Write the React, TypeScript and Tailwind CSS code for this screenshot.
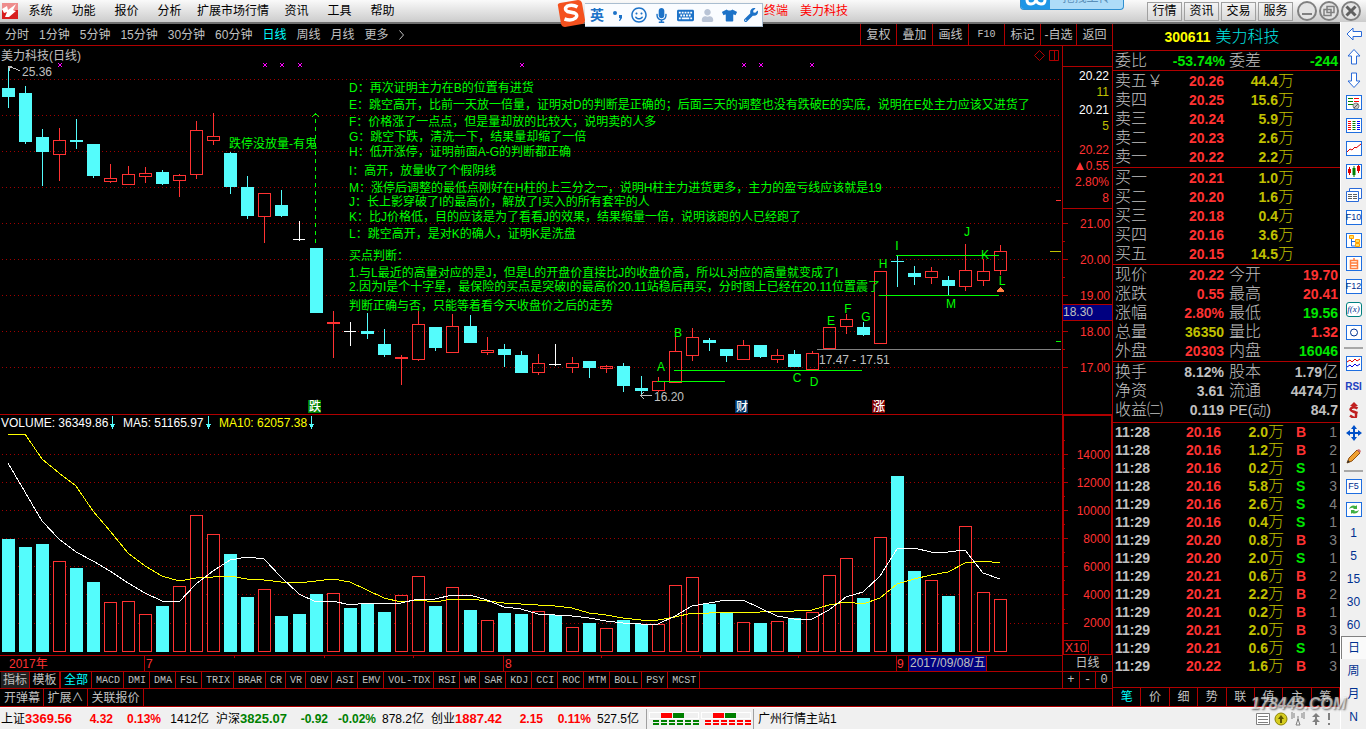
import React from 'react';
import { clsx } from 'clsx';
import {
  FaKeyboard,
  FaMicrophone,
  FaRegSmile,
  FaTshirt,
  FaUser,
  FaWrench,
} from 'react-icons/fa';

const RED = '#ff3232';
const LINE = '#b00000';
const CYAN = '#54fcfc';
const GREEN = '#00ff00';

const menus = ['系统', '功能', '报价', '分析', '扩展市场行情', '资讯', '工具', '帮助'];
const headerButtons = ['行情', '资讯', '交易', '服务'];
const periods = ['分时', '1分钟', '5分钟', '15分钟', '30分钟', '60分钟', '日线', '周线', '月线', '更多'];
const chartTools = ['复权', '叠加', '画线', 'F10', '标记', '-自选', '返回'];

const indicators = [
  'MACD', 'DMI', 'DMA', 'FSL', 'TRIX', 'BRAR', 'CR', 'VR', 'OBV', 'ASI', 'EMV',
  'VOL-TDX', 'RSI', 'WR', 'SAR', 'KDJ', 'CCI', 'ROC', 'MTM', 'BOLL', 'PSY', 'MCST',
];

type Kind = 'down' | 'up' | 'flat' | 'cross';

// kind, high, body top, body bottom, low
const candles: [Kind, number, number, number, number][] = [
  ['down', 66, 88, 97, 108],
  ['down', 86, 93, 142, 144],
  ['down', 129, 137, 152, 186],
  ['up', 128, 140, 155, 181],
  ['down', 119, 140, 142, 149],
  ['down', 144, 144, 176, 178],
  ['up', 164, 178, 182, 183],
  ['up', 166, 174, 185, 185],
  ['up', 167, 173, 177, 183],
  ['down', 170, 172, 184, 185],
  ['up', 174, 175, 181, 197],
  ['up', 121, 130, 175, 179],
  ['up', 113, 136, 141, 145],
  ['down', 152, 153, 187, 194],
  ['down', 176, 187, 216, 219],
  ['up', 193, 193, 217, 243],
  ['down', 190, 205, 216, 217],
  ['flat', 221, 239, 240, 241],
  ['down', 248, 248, 313, 313],
  ['up', 311, 322, 324, 358],
  ['flat', 322, 331, 332, 346],
  ['down', 313, 331, 334, 339],
  ['down', 329, 344, 355, 357],
  ['up', 355, 357, 359, 385],
  ['up', 311, 324, 360, 361],
  ['down', 327, 327, 348, 351],
  ['up', 314, 326, 353, 353],
  ['down', 315, 326, 343, 343],
  ['up', 337, 350, 353, 355],
  ['down', 344, 349, 355, 367],
  ['down', 351, 355, 373, 373],
  ['up', 354, 363, 373, 375],
  ['flat', 344, 364, 365, 366],
  ['up', 357, 363, 368, 373],
  ['down', 361, 361, 368, 378],
  ['up', 365, 366, 369, 373],
  ['down', 363, 366, 386, 392],
  ['down', 376, 388, 391, 396],
  ['up', 377, 381, 391, 392],
  ['up', 337, 351, 383, 383],
  ['up', 328, 337, 356, 361],
  ['down', 338, 340, 343, 351],
  ['down', 349, 349, 356, 362],
  ['up', 340, 345, 360, 360],
  ['down', 345, 345, 357, 358],
  ['up', 349, 355, 360, 363],
  ['down', 350, 354, 367, 367],
  ['up', 351, 353, 370, 370],
  ['up', 327, 327, 349, 349],
  ['up', 314, 319, 327, 334],
  ['down', 322, 327, 335, 336],
  ['up', 271, 271, 344, 344],
  ['cross', 256, 261, 262, 287],
  ['down', 266, 273, 277, 285],
  ['up', 267, 271, 278, 284],
  ['down', 276, 280, 286, 295],
  ['up', 244, 270, 287, 291],
  ['up', 259, 271, 281, 286],
  ['up', 245, 251, 271, 275],
];

const volumeTops = [
  539, 547, 544, 561, 568, 582, 602, 601, 614, 606, 586, 515, 534, 554, 597,
  589, 616, 614, 594, 593, 608, 604, 612, 595, 576, 606, 587, 610, 620, 613,
  614, 611, 615, 627, 623, 628, 620, 624, 624, 585, 577, 604, 613, 622, 623,
  621, 618, 612, 575, 558, 598, 537, 476, 571, 580, 596, 526, 592, 599,
];
const hollowVolumes = [
  3, 6, 7, 8, 10, 11, 12, 15, 19, 23, 24, 26, 28, 31, 33, 35, 38, 39, 40, 43,
  45, 47, 48, 49, 51, 54, 56, 57, 58,
];

const ma5 = [
  463, 492, 521, 539, 552, 561, 571, 583, 593, 601, 602, 584, 571, 560, 557,
  559, 577, 594, 602, 601, 605, 603, 603, 603, 599, 599, 595, 595, 600, 607,
  609, 614, 615, 616, 618, 621, 623, 624, 624, 616, 606, 603, 600, 600, 608,
  616, 619, 619, 610, 597, 592, 576, 549, 548, 552, 552, 550, 573, 579,
];
const ma10 = [
  434, 434, 459, 473, 486, 511, 531, 553, 566, 576, 581, 578, 577, 576, 579,
  580, 582, 583, 581, 579, 582, 590, 598, 602, 600, 602, 599, 599, 601, 603,
  604, 605, 606, 608, 613, 615, 618, 620, 620, 617, 613, 613, 612, 612, 612,
  611, 611, 610, 605, 602, 604, 598, 584, 579, 575, 572, 563, 561, 563,
];

const notes: [number, string][] = [
  [87, 'D：再次证明主力在B的位置有进货'],
  [104, 'E：跳空高开，比前一天放一倍量，证明对D的判断是正确的；后面三天的调整也没有跌破E的实底，说明在E处主力应该又进货了'],
  [121, 'F：价格涨了一点点，但是量却放的比较大，说明卖的人多'],
  [136, 'G：跳空下跌，清洗一下，结果量却缩了一倍'],
  [151, 'H：低开涨停，证明前面A-G的判断都正确'],
  [170, 'I：高开，放量收了个假阴线'],
  [187, 'M：涨停后调整的最低点刚好在H柱的上三分之一，说明H柱主力进货更多，主力的盈亏线应该就是19'],
  [201, 'J：长上影穿破了I的最高价，解放了I买入的所有套牢的人'],
  [216, 'K：比J价格低，目的应该是为了看看J的效果，结果缩量一倍，说明该跑的人已经跑了'],
  [233, 'L：跳空高开，是对K的确人，证明K是洗盘'],
  [255, '买点判断：'],
  [272, '1.与L最近的高量对应的是J，但是L的开盘价直接比J的收盘价高，所以L对应的高量就变成了I'],
  [286, '2.因为I是个十字星，最保险的买点是突破I的最高价20.11站稳后再买，分时图上已经在20.11位置震了'],
  [305, '判断正确与否，只能等着看今天收盘价之后的走势'],
];

const letters: [string, number, number][] = [
  ['A', 661, 367], ['B', 678, 333], ['C', 797, 378], ['D', 814, 382],
  ['E', 831, 321], ['F', 848, 309], ['G', 866, 317], ['H', 883, 264],
  ['I', 897, 246], ['J', 967, 232], ['K', 985, 255], ['L', 1002, 281],
  ['M', 951, 304],
];

const badges: [string, number, string][] = [
  ['跌', 308, '#008000'],
  ['财', 735, '#003366'],
  ['涨', 872, '#800000'],
];

const asks = [
  ['卖五', '20.26', '44.4'],
  ['卖四', '20.25', '15.6'],
  ['卖三', '20.24', '5.9'],
  ['卖二', '20.23', '2.6'],
  ['卖一', '20.22', '2.2'],
];
const bids = [
  ['买一', '20.21', '1.0'],
  ['买二', '20.20', '1.6'],
  ['买三', '20.18', '0.4'],
  ['买四', '20.16', '3.6'],
  ['买五', '20.15', '14.5'],
];

type Detail = [string, string, string, string, string, string];
const R = 'text-[#ff3232]';
const G = 'text-[#00e600]';
const Y = 'text-[#c0c000]';
const W = 'text-[#c0c0c0]';
const priceDetails: Detail[] = [
  ['现价', '20.22', R, '今开', '19.70', R],
  ['涨跌', '0.55', R, '最高', '20.41', R],
  ['涨幅', '2.80%', R, '最低', '19.56', G],
  ['总量', '36350', Y, '量比', '1.32', R],
  ['外盘', '20303', R, '内盘', '16046', G],
];
const shareDetails: Detail[] = [
  ['换手', '8.12%', W, '股本', '1.79亿', W],
  ['净资', '3.61', W, '流通', '4474万', W],
  ['收益㈡', '0.119', W, 'PE(动)', '84.7', W],
];

const ticks: [string, string, string, 'B' | 'S', number][] = [
  ['11:28', '20.16', '2.0', 'B', 1],
  ['11:28', '20.16', '1.2', 'B', 2],
  ['11:28', '20.16', '0.2', 'S', 1],
  ['11:28', '20.16', '5.8', 'S', 3],
  ['11:29', '20.16', '2.6', 'S', 4],
  ['11:29', '20.16', '0.4', 'S', 1],
  ['11:29', '20.20', '0.8', 'B', 3],
  ['11:29', '20.20', '2.0', 'S', 1],
  ['11:29', '20.21', '0.6', 'B', 2],
  ['11:29', '20.21', '2.2', 'B', 2],
  ['11:29', '20.21', '0.2', 'B', 1],
  ['11:29', '20.21', '2.0', 'B', 3],
  ['11:29', '20.21', '0.6', 'S', 1],
  ['11:29', '20.22', '1.6', 'B', 3],
];

const quoteTabs = ['笔', '价', '细', '势', '联', '值', '主', '筹'];

const indexes = [
  { name: '上证', value: '3369.56', change: '4.32', percent: '0.13%', amount: '1412亿', up: true },
  { name: '沪深', value: '3825.07', change: '-0.92', percent: '-0.02%', amount: '878.2亿', up: false },
  { name: '创业', value: '1887.42', change: '2.15', percent: '0.11%', amount: '527.5亿', up: true },
];

const barX = (index: number) => Math.floor(2.35 + index * 17.1);
const toPoints = (values: number[]) =>
  values.map((y, i) => `${barX(i) + 6},${y}`).join(' ');

const Candle: React.FC<{ index: number }> = ({ index }) => {
  const [kind, high, top, bottom, low] = candles[index];
  const x = barX(index);
  const height = Math.max(bottom - top, 1);

  if (kind === 'up') {
    return (
      <g fill={RED}>
        <rect x={x + 6} y={high} width={1} height={top - high} />
        <rect x={x + 6} y={bottom} width={1} height={low - bottom} />
        {height <= 2 ? (
          <rect x={x} y={top} width={13} height={height} />
        ) : (
          <rect
            x={x + 0.5}
            y={top + 0.5}
            width={12}
            height={height - 1}
            fill="none"
            stroke={RED}
          />
        )}
      </g>
    );
  }
  return (
    <g fill={kind === 'flat' ? '#ffffff' : CYAN}>
      <rect x={x + 6} y={high} width={1} height={low - high} />
      <rect x={x} y={top} width={kind === 'flat' ? 12 : 13} height={height} />
    </g>
  );
};

const GridLines: React.FC<{ rows: number[] }> = ({ rows }) => (
  <g stroke="#a00000" strokeDasharray="1 3">
    {rows.map((y) => (
      <line key={y} x1={2} x2={1060} y1={y + 0.5} y2={y + 0.5} />
    ))}
  </g>
);

const PriceChart = () => (
  <svg
    className="block h-[368px] w-full"
    viewBox="0 46 1061 368"
    preserveAspectRatio="xMinYMin meet"
    fontSize={12}
  >
    <g shapeRendering="crispEdges">
      <GridLines rows={[79, 115, 151, 187, 223, 259, 295, 331, 367]} />
      {candles.map((_, i) => (
        <Candle key={i} index={i} />
      ))}
      <g fill={GREEN}>
        <rect x={896} y={255} width={103} height={1} />
        <rect x={879} y={295} width={120} height={1} />
        <rect x={674} y={370} width={188} height={1} />
        <rect x={657} y={381} width={68} height={1} />
        <rect x={1056} y={341} width={5} height={1} />
        <path d="M315 113h1v1h1v1h-3v-1h1zM312 116h2v-1h-1v2h-1zM317 115h1v1h1v1h-1z" />
      </g>
      <line x1={315.5} x2={315.5} y1={119} y2={243} stroke={GREEN} strokeDasharray="4 4" />
      <rect x={817} y={349} width={244} height={1} fill="#808080" />
      <rect x={1050} y={251} width={11} height={1} fill="#c0c000" />
      <rect x={1056} y={200} width={5} height={1} fill={RED} />
      <path d="M997 291l3-4h1l3 4v1h-7z" fill="#ff7f40" />
      {[60, 265, 282, 300, 522, 744, 761, 812].map((x) => (
        <path
          key={x}
          d={`M${x - 2} 63h1v1h2v-1h1v1h-1v2h1v1h-1v-1h-2v1h-1v-1h1v-2h-1z`}
          fill="#ff00ff"
        />
      ))}
    </g>
    <g fill="none" stroke="#b00000">
      <path d="M1039.5 50.5l5 5-5 5-5-5z" />
      <path d="M1049.5 50.5h9v10h-9zM1054.5 50.5v10" />
    </g>
    <g fill="none" stroke="#c0c0c0" shapeRendering="crispEdges">
      <path d="M8 67l5 1 3 1 4 2M8 67l4-1M9 67l1 4" />
      <path d="M640 395.5h12M641 395l3-3M641 396l3 3" />
    </g>
    <g fill="#c0c0c0">
      <text x={1} y={60} fontSize={12}>美力科技(日线)</text>
      <text x={22} y={76}>25.36</text>
      <text x={654} y={401}>16.20</text>
      <text x={819} y={364}>17.47 - 17.51</text>
    </g>
    <g fill={GREEN}>
      <text x={229} y={148}>跌停没放量-有鬼</text>
      {notes.map(([y, text]) => (
        <text key={y} x={349} y={y + 5}>{text}</text>
      ))}
      {letters.map(([letter, x, y]) => (
        <text key={letter} x={x} y={y + 4} textAnchor="middle">{letter}</text>
      ))}
    </g>
    {badges.map(([label, x, color]) => (
      <g key={label}>
        <rect x={x} y={400} width={13} height={13} fill={color} />
        <text x={x + 1} y={411} fill="#ffffff" fontWeight={500}>{label}</text>
      </g>
    ))}
  </svg>
);

const VolumeChart = () => (
  <svg
    className="block h-[241px] w-full border-t border-[#b00000]"
    viewBox="0 415 1061 240"
    preserveAspectRatio="xMinYMin meet"
    fontSize={12}
  >
    <g shapeRendering="crispEdges">
      <GridLines rows={[454, 482, 510, 538, 566, 594, 623]} />
      {volumeTops.map((top, i) =>
        hollowVolumes.includes(i) ? (
          <rect
            key={i}
            x={barX(i) + 0.5}
            y={top + 0.5}
            width={12}
            height={651 - top}
            fill="#000000"
            stroke={RED}
          />
        ) : (
          <rect key={i} x={barX(i)} y={top} width={13} height={652 - top} fill={CYAN} />
        )
      )}
      <polyline points={toPoints(ma10)} fill="none" stroke="#ffff00" />
      <polyline points={toPoints(ma5)} fill="none" stroke="#ffffff" />
      {[112, 208, 311].map((x) => (
        <path key={x} d={`M${x} 416h1v8h2v1h-1v2h-1v2h-1v-2h-1v-2h-1v-1h2z`} fill={CYAN} />
      ))}
    </g>
    <text x={1} y={427} fill="#ffffff">VOLUME: 36349.86</text>
    <text x={123} y={427} fill="#ffffff">MA5: 51165.97</text>
    <text x={219} y={427} fill="#ffff00">MA10: 62057.38</text>
  </svg>
);

const TimeAxis = () => (
  <svg
    className="block h-[16px] w-full border-t border-[#b00000]"
    viewBox="0 656 1061 15"
    preserveAspectRatio="xMinYMin meet"
    fontSize={12}
  >
    <g fill={LINE} shapeRendering="crispEdges">
      {[144, 503, 896].map((x) => (
        <rect key={x} x={x} y={656} width={1} height={15} />
      ))}
      {[234, 324, 413, 601, 700, 798].map((x) => (
        <rect key={x} x={x} y={656} width={1} height={2} />
      ))}
      <rect x={908} y={656} width={79} height={15} />
      <rect x={909} y={656} width={77} height={15} fill="#000080" />
    </g>
    <g fill={RED}>
      <text x={9} y={668}>2017年</text>
      <text x={146} y={668}>7</text>
      <text x={505} y={668}>8</text>
      <text x={897} y={668}>9</text>
    </g>
    <text x={910} y={667} fill="#c0c0c0">2017/09/08/五</text>
  </svg>
);

const AxisColumn = () => (
  <div className="flex w-[50px] shrink-0 flex-col border-l border-[#b00000]">
    <div className="h-[20px]" />
    <div className="flex h-[143px] flex-col border-y border-[#b00000] pr-[3px] text-right leading-[16px]">
      <span className="pt-px text-white">20.22</span>
      <span className="text-[#c0c000]">11</span>
      <span className="pt-[2px] text-white">20.21</span>
      <span className="text-[#c0c000]">5</span>
      <div className="flex flex-col pt-[8px] text-[#ff3232]">
        <span>20.22</span>
        <span className="flex items-center justify-end gap-[2px]">
          <svg className="h-[8px] w-[8px]" viewBox="0 0 8 8">
            <path d="M4 0l4 8H0z" fill={RED} />
          </svg>
          0.55
        </span>
        <span>2.80%</span>
        <span>8</span>
      </div>
    </div>
    <svg className="block h-[205px] w-full" viewBox="0 209 49 205" fontSize={12}>
      <g fill={LINE} shapeRendering="crispEdges">
        {[223, 259, 295, 331, 367].map((y) => (
          <rect key={y} x={0} y={y} width={5} height={1} />
        ))}
        {[241, 277, 313, 349].map((y) => (
          <rect key={y} x={0} y={y} width={2} height={1} />
        ))}
        <rect x={0} y={304} width={49} height={17} />
        <rect x={0} y={305} width={49} height={15} fill="#000080" />
      </g>
      <text x={0} y={316} fill="#c0c0c0">18.30</text>
      <g fill={RED} textAnchor="end">
        {['21.00', '20.00', '19.00', '18.00', '17.00'].map((label, i) => (
          <text key={label} x={47} y={228 + i * 36}>{label}</text>
        ))}
      </g>
    </svg>
    <svg
      className="block h-[241px] w-full border border-t-2 border-[#b00000]"
      viewBox="0 416 47 238"
      fontSize={12}
    >
      <g fill={LINE} shapeRendering="crispEdges">
        {[454, 482, 510, 538, 566, 594, 623].map((y) => (
          <React.Fragment key={y}>
            <rect x={0} y={y} width={4} height={1} />
            <rect x={0} y={y - 14} width={1} height={1} />
          </React.Fragment>
        ))}
        <path d="M0 640h25v14h-1v-13H0z" />
      </g>
      <g fill={RED}>
        <text x={1} y={652}>X10</text>
        <g textAnchor="end">
          {[14000, 12000, 10000, 8000, 6000, 4000, 2000].map((value, i) => (
            <text key={value} x={46} y={459 + i * 28}>{value}</text>
          ))}
        </g>
      </g>
    </svg>
    <div className="h-[16px] text-center leading-[16px] text-[#c0c0c0]">日线</div>
    <div className="flex h-[17px] divide-x divide-[#b00000] border-t border-[#b00000] font-['Liberation_Mono',monospace] leading-[16px] text-[#c0c0c0]">
      {['+', '-', '0'].map((label) => (
        <button key={label} type="button" className="flex-1">
          {label}
        </button>
      ))}
    </div>
  </div>
);

const ImeBar = () => (
  <div className="absolute left-[557px] top-0 z-10 flex h-[27px] w-[206px] items-center">
    <svg className="h-[27px] w-[28px] shrink-0" viewBox="0 0 28 27">
      <path d="M1 6Q0 4 3 3L21 0q3 0 4 3l3 17q0 3-3 4L8 27q-3 0-4-3z" fill="#f4511e" />
      <path
        d="M20.500 7q-5-3-10-1-4 3 0 5.500l7 1.500q4 2 1 5-4 3.500-11 1"
        fill="none"
        stroke="#ffffff"
        strokeWidth="3.500"
      />
    </svg>
    <div className="flex h-[24px] flex-1 items-center justify-between self-end border border-l-0 border-[#a9bdd0] bg-[#fafcff] pl-[5px] pr-[4px] text-[#1c72c8]">
      <span className="text-[14px] font-bold leading-none">英</span>
      <svg className="h-[14px] w-[12px]" viewBox="0 0 12 14">
        <circle cx="4" cy="5" r="2" fill="currentColor" />
        <path d="M8 7h3v3l-2 3H8l1-3H8z" fill="currentColor" />
      </svg>
      <FaRegSmile size={16} />
      <FaMicrophone size={15} />
      <FaKeyboard size={17} />
      <FaUser size={13} className="text-[#b9c4d6]" />
      <FaTshirt size={15} />
      <FaWrench size={14} />
    </div>
  </div>
);

const Header = () => (
  <header className="relative flex h-[24px] items-center border-b-2 border-[#707070] bg-linear-to-b from-[#fafafa] to-[#cccccc] text-black">
    <svg className="ml-[2px] h-[16px] w-[16px] shrink-0" viewBox="0 0 16 16">
      <rect width="16" height="16" fill="#d81e1e" />
      <rect width="16" height="7" fill="#ee8c8c" />
      <path d="M0 6l5-3 1 4 8-6-3 6 3 1-7 6H3l2-5-3 1z" fill="#ffffff" />
    </svg>
    <nav className="flex pl-px">
      {menus.map((menu) => (
        <button
          key={menu}
          type="button"
          className={clsx('text-center', menu.length > 2 ? 'w-[84px]' : 'w-[43px]')}
        >
          {menu}
        </button>
      ))}
    </nav>
    <ImeBar />
    <div className="absolute left-[764px] flex gap-[12px] text-[#ff0000]">
      <span>终端</span>
      <span>美力科技</span>
    </div>
    <div className="absolute left-[1020px] top-0 flex h-[10px] w-[104px] overflow-hidden rounded-b border border-t-0 border-[#2f8fd0] bg-[#aedcf8]">
      <div className="flex w-[29px] justify-center bg-[#1e96e6]">
        <svg className="h-[6px] w-[22px]" viewBox="0 0 22 6">
          <path
            d="M2 0q0 4 4 4t5-4M11 0q1 4 5 4t4-4"
            fill="none"
            stroke="#ffffff"
            strokeWidth="3"
          />
        </svg>
      </div>
      <span className="-mt-[10px] flex-1 text-center leading-[16px] text-[#5a8fb8]">拖拽上传</span>
    </div>
    <div className="ml-auto flex items-center gap-[2px] pr-[5px]">
      {headerButtons.map((label) => (
        <button
          key={label}
          type="button"
          className="h-[19px] w-[35px] border border-[#a0a0a0] bg-linear-to-b from-[#f4f4f4] to-[#d8d8d8] leading-[16px]"
        >
          {label}
        </button>
      ))}
      <svg className="ml-[2px] h-[22px] w-[64px]" viewBox="0 0 64 22" fill="none" stroke="#808080">
        <g fill="#e4e4e4" strokeWidth="2">
          <circle cx="10" cy="11" r="9" />
          <circle cx="32" cy="11" r="9" />
          <circle cx="54" cy="11" r="9" />
        </g>
        <path d="M5 14h10" strokeWidth="2" />
        <path d="M30 6.500h7v6h-7zM27 9.500h7v6h-7z" fill="#e4e4e4" strokeWidth="1.500" />
        <path d="M49.500 6.500l9 9M58.500 6.500l-9 9" stroke="#606060" strokeWidth="3" />
      </svg>
    </div>
  </header>
);

const OrderTable: React.FC<{ rows: string[][] }> = ({ rows }) => (
  <table className="w-full table-fixed border-collapse leading-[18px]">
    <tbody>
      {rows.map(([label, price, amount]) => (
        <tr key={label} className="h-[19px]">
          <th scope="row" className="w-[60px] whitespace-nowrap p-0 pl-[2px] text-left align-middle text-[16px] font-light">
            {label}
            {label === '卖五' && <span>￥</span>}
          </th>
          <td className="w-[51px] p-0 text-right align-middle text-[14px] font-bold text-[#ff3232]">{price}</td>
          <td className="w-[70px] p-0 text-right align-middle text-[14px] font-bold text-[#c0c000]">
            {amount}
            <span className="text-[16px] font-light leading-none">万</span>
          </td>
          <td className="p-0" />
        </tr>
      ))}
    </tbody>
  </table>
);

const DetailTable: React.FC<{ rows: Detail[] }> = ({ rows }) => (
  <table className="w-full table-fixed border-collapse leading-[18px]">
    <tbody>
      {rows.map(([label, value, color, label2, value2, color2]) => (
        <tr key={label} className="h-[19px]">
          <th scope="row" className="w-[56px] whitespace-nowrap p-0 pl-[2px] text-left align-middle text-[16px] font-light">
            {label}
          </th>
          <td className={clsx('w-[55px] p-0 text-right align-middle text-[14px] font-bold', color)}>{value}</td>
          <th
            scope="row"
            className={clsx(
              'w-[52px] whitespace-nowrap p-0 pl-[5px] text-left align-middle font-light',
              label2.startsWith('PE') ? 'text-[14px]' : 'text-[16px]'
            )}
          >
            {label2}
          </th>
          <td className={clsx('p-0 pr-[2px] text-right align-middle text-[14px] font-bold', color2)}>
            {value2.replace(/[亿万]/, '')}
            <span className="text-[16px] font-light leading-none">{value2.match(/[亿万]/)?.[0]}</span>
          </td>
        </tr>
      ))}
    </tbody>
  </table>
);

const QuotePanel = () => (
  <aside className="flex w-[228px] shrink-0 flex-col divide-y divide-[#b00000] border-l border-[#b00000] text-[#c0c0c0]">
    <div className="flex h-[27px] items-center justify-center gap-[5px] pr-[9px]">
      <span className="text-[14px] font-bold text-[#ffff00]">300611</span>
      <span className="text-[16px] font-light text-[#00e6e6]">美力科技</span>
    </div>
    <div className="flex h-[20px] items-center pl-[2px] pr-[2px] text-[16px] font-light">
      <span>委比</span>
      <span className="w-[78px] text-right text-[14px] font-bold text-[#00e600]">-53.74%</span>
      <span className="pl-[4px]">委差</span>
      <span className="flex-1 text-right text-[14px] font-bold text-[#00e600]">-244</span>
    </div>
    <div className="h-[97px]">
      <OrderTable rows={asks} />
    </div>
    <div className="h-[97px]">
      <OrderTable rows={bids} />
    </div>
    <div className="h-[97px]">
      <DetailTable rows={priceDetails} />
    </div>
    <div className="h-[61px]">
      <DetailTable rows={shareDetails} />
    </div>
    <div className="flex-1">
      <table className="w-full table-fixed border-collapse text-[14px] font-bold leading-[18px]">
        <tbody>
          {ticks.map(([time, price, amount, side, count], i) => (
            <tr key={i} className="h-[18px]">
              <td className="w-[50px] p-0 pl-[2px]">{time}</td>
              <td className="w-[58px] p-0 text-right text-[#ff3232]">{price}</td>
              <td className="w-[63px] p-0 text-right text-[#c0c000]">
                {amount}
                <span className="text-[16px] font-light leading-none">万</span>
              </td>
              <td className={clsx('w-[30px] p-0 pl-[12px]', side === 'B' ? 'text-[#ff3232]' : 'text-[#00e600]')}>
                {side}
              </td>
              <td className="p-0 pr-[3px] text-right font-normal text-[#808080]">{count}</td>
            </tr>
          ))}
        </tbody>
      </table>
    </div>
    <div className="relative flex h-[19px] divide-x divide-[#b00000] border-b border-[#b00000]">
      {quoteTabs.map((tab, i) => (
        <button key={tab} type="button" className={clsx('flex-1 leading-[16px]', i === 0 && 'text-[#00ffff]')}>
          {tab}
        </button>
      ))}
      <span className="pointer-events-none absolute right-[-6px] top-[8px] z-10 text-[16px] font-bold italic leading-none text-white/60 [text-shadow:1px_1px_2px_#606060]">
        178448.COM
      </span>
    </div>
  </aside>
);

const Meter: React.FC<{ color: string }> = ({ color }) => (
  <svg className="h-[16px] w-[50px]" viewBox="0 0 50 16" shapeRendering="crispEdges">
    <path d="M0 1.500h49v6H0z" fill="#f0f0f0" stroke="#ffffff" />
    <rect x="12" y="2" width="11" height="5" fill="#ff0000" />
    <rect x="24" y="2" width="11" height="5" fill="#008000" />
    {[4, 12, 20, 28, 36, 44].map((x) => (
      <path key={x} d={`M${x} 9h6v2h-6zM${x} 12h6v2h-6z`} fill={color} />
    ))}
  </svg>
);

const StatusBar = () => (
  <footer className="flex h-[22px] items-center border-t border-white bg-[#f0f0f0] text-black">
    {indexes.map((item) => (
      <div
        key={item.name}
        className="grid w-[215px] shrink-0 grid-cols-[72px_40px_48px_48px] items-center pl-px text-right"
      >
        <span className="flex items-center">
          {item.name}
          <b className={clsx('text-[13px]', item.up ? 'text-[#ff0000]' : 'text-[#008000]')}>{item.value}</b>
        </span>
        <b className={item.up ? 'text-[#ff0000]' : 'text-[#008000]'}>{item.change}</b>
        <b className={item.up ? 'text-[#ff0000]' : 'text-[#008000]'}>{item.percent}</b>
        <span>{item.amount}</span>
      </div>
    ))}
    <div className="ml-px flex h-[20px] items-center gap-[2px] border-x border-[#a0a0a0] px-[2px]">
      <Meter color="#008000" />
      <Meter color="#ff0000" />
    </div>
    <span className="pl-[4px]">广州行情主站1</span>
    <svg className="ml-auto mr-[6px] h-[16px] w-[78px]" viewBox="0 0 78 16" fill="none" stroke="#808080">
      <path d="M.5 2.500h13v11H.5zM2 5.500h10M2 8.500h10M2 11.500h10" fill="#ffffff" />
      <circle cx="25" cy="8" r="6" fill="#d6cc20" stroke="#8c8400" />
      <path d="M25 4l3 4h-2v4h-2V8h-2z" fill="#5c5600" stroke="none" />
      <path d="M42 5v4m-2 5l2-6 2 6zM38 2v5M46 2v5M36 1v7M48 1v7" />
      <path d="M60 2l4 4h-3v2l3 3h-3v3h-2v-3h-3l3-3V6h-3z" fill="#808080" stroke="none" />
      <path d="M73 2v7M73 12v2" strokeWidth="2" />
    </svg>
  </footer>
);

const Boxed: React.FC<{ children?: React.ReactNode }> = ({ children }) => (
  <svg className="h-[16px] w-[16px]" viewBox="0 0 16 16" fill="none">
    <rect x="0.500" y="0.500" width="15" height="14" fill="#ffffff" stroke="#1e6ee0" />
    {children}
  </svg>
);

const Arrow: React.FC<{ d: string }> = ({ d }) => (
  <svg className="h-[16px] w-[16px]" viewBox="0 0 16 16">
    <path d={d} fill="#ffffff" stroke="#2a6ad8" />
  </svg>
);

const LabelBox: React.FC<{ label: string }> = ({ label }) => (
  <span className="flex h-[15px] w-[16px] items-center justify-center border border-[#1e6ee0] bg-white text-[9px] leading-none text-[#003090]">
    {label}
  </span>
);

const sideIcons: React.ReactNode[] = [
  <Arrow d="M1 8l6-6v3.500h8.500v5H7V14z" />,
  <Arrow d="M8 .5l6 6.500H10.500v8h-5V7H2z" />,
  <Arrow d="M8 15.500l6-6.500H10.500V1h-5v8H2z" />,
  <Boxed>
    <path d="M2 3.500h5M2 6.500h5M2 9.500h5" stroke="#008000" />
    <path d="M8 3.500h5M8 6.500h5" stroke="#ff0000" />
    <circle cx="10" cy="11" r="3" fill="#c8c8c8" stroke="#808080" />
    <path d="M8 13l4-4" stroke="#606060" />
  </Boxed>,
  <Boxed>
    <path d="M2 3.500h3M2 5.500h3M2 7.500h3M2 9.500h3M2 11.500h3" stroke="#ff0000" />
    <path d="M6.500 3.500h3M6.500 5.500h3M6.500 7.500h3M6.500 9.500h3M6.500 11.500h3" stroke="#008000" />
    <path d="M11 3.500h3M11 5.500h3M11 7.500h3M11 9.500h3M11 11.500h3" stroke="#0000ff" />
  </Boxed>,
  <Boxed>
    <path d="M1 11l3-3 2 1 3-3 1 1 5-4" stroke="#e00000" />
  </Boxed>,
  <Boxed>
    <path d="M3.500 3v8M12.500 1v8" stroke="#e00000" />
    <path d="M8 2v11" stroke="#008000" />
    <path d="M2 5h3v4H2zM11 2h3v5h-3z" fill="#e00000" />
    <path d="M6.500 4h3v7h-3z" fill="#008000" />
  </Boxed>,
  <svg className="h-[16px] w-[16px]" viewBox="0 0 16 16" fill="#ffffff" stroke="#2a6ad8">
    <path d="M3.500 1.500h12v10h-12z" />
    <path d="M.5 4.500h12v10H.5z" />
    <path d="M2 7.500h9M2 9.500h9M2 11.500h9" stroke="#606060" strokeDasharray="4 1" />
  </svg>,
  <LabelBox label="F10" />,
  <Boxed>
    <path d="M5.500 5v8h4M5.500 8.500h4" stroke="#1e6ee0" />
    <path d="M3.500 2.500h4v3h-4zM9.500 6.500h4v3h-4zM9.500 10.500h4v3h-4z" fill="#ffe060" stroke="#ffa000" />
  </Boxed>,
  <Boxed>
    <path d="M4.500 4.500h7v8h-7zM4 7h8M4 9.800h8M8 2v3" stroke="#ff7f40" strokeWidth="1.500" />
  </Boxed>,
  <LabelBox label="F12" />,
  <span className="flex h-[15px] w-[16px] items-center justify-center rounded-[3px] border border-[#008080] bg-white font-['Liberation_Serif',serif] text-[9px] italic leading-none text-[#003090]">
    f(x)
  </span>,
  <Boxed>
    <circle cx="8" cy="7.500" r="3.500" stroke="#003090" />
  </Boxed>,
];

const sideIcons2: React.ReactNode[] = [
  <Boxed>
    <path d="M1 6l3-2 2 2 3-3 2 2 3-2" stroke="#e00000" />
    <path d="M1 11l3-2 2 2 3-3 2 2 3-2" stroke="#0000e0" />
  </Boxed>,
  <span className="text-[10px] font-bold text-[#2040c0]">RSI</span>,
  <svg className="h-[16px] w-[16px]" viewBox="0 0 16 16">
    <path d="M8 0l4 4H4z" fill="#c02020" />
    <path
      d="M11.500 6.500Q8 4 5.500 6T7 9.500t3.500 1T10 14t-6-.5"
      fill="none"
      stroke="#c02020"
      strokeWidth="2.500"
    />
  </svg>,
  <svg className="h-[16px] w-[16px]" viewBox="0 0 16 16" fill="#0050c8">
    <path d="M8 0l3 4H9v3h3V5l4 3-4 3V9H9v3h2l-3 4-3-4h2V9H4v2L0 8l4-3v2h3V4H5z" />
  </svg>,
  <svg className="h-[16px] w-[16px]" viewBox="0 0 16 16">
    <path d="M1 15l2-5 8-8 3 3-8 8z" fill="#f0a030" stroke="#905010" />
    <path d="M11 2l2-1 2 2-1 2z" fill="#d07070" />
    <path d="M1 15l1-3 2 2z" fill="#303030" />
  </svg>,
];

const SideBar = () => (
  <div className="relative -mt-[2px] flex w-[26px] shrink-0 flex-col border-l border-white bg-[#f0f0f0] text-[#003090]">
    {sideIcons.map((icon, i) => (
      <button key={i} type="button" className="flex h-[23px] items-center justify-center">
        {icon}
      </button>
    ))}
    <hr className="mx-[3px] my-[3px] border-t-2 border-[#a8a8a8]" />
    {sideIcons2.map((icon, i) => (
      <button key={i} type="button" className="flex h-[23px] items-center justify-center">
        {icon}
      </button>
    ))}
    <hr className="mx-[3px] my-[3px] border-t-2 border-[#a8a8a8]" />
    <button type="button" className="flex h-[23px] items-center justify-center">
      <LabelBox label="F5" />
    </button>
    <button type="button" className="flex h-[23px] items-center justify-center">
      <Boxed>
        <path d="M3 7q2-5 7-3l1-1v4H7l1-1q-2-1-5 1zM13 8q-2 5-7 3l-1 1V8h4L8 9q2 1 5-1z" fill="#40b040" />
      </Boxed>
    </button>
    {['1', '5', '15', '30', '60', '日', '周', '月', 'N'].map((label) => (
      <button
        key={label}
        type="button"
        className={clsx('h-[23px] text-center', label === '日' && 'border-l border-t border-[#808080] bg-[#fafafa]')}
      >
        {label}
      </button>
    ))}
  </div>
);

const ChartToolbar = () => (
  <div className="flex h-[22px] items-center border-b border-[#b00000] pl-[5px] text-[#c0c0c0]">
    <div className="flex items-center gap-[10px]">
      {periods.map((period) => (
        <button key={period} type="button" className={clsx(period === '日线' && 'text-[#00ffff]')}>
          {period}
        </button>
      ))}
      <svg className="h-[10px] w-[5px]" viewBox="0 0 5 10">
        <path d="M.5.5l4 4.500-4 4.500" fill="none" stroke="#c0c0c0" />
      </svg>
    </div>
    <div className="ml-auto flex h-full">
      {chartTools.map((tool) => (
        <button
          key={tool}
          type="button"
          className={clsx(
            'w-[36px] whitespace-nowrap border-l border-[#b00000]',
            tool === 'F10' && "font-['Liberation_Mono',monospace] text-[10px]"
          )}
        >
          {tool}
        </button>
      ))}
    </div>
  </div>
);

const IndicatorTabs = () => (
  <div className="flex h-[17px] overflow-hidden border-t border-[#b00000] pl-px text-[#c0c0c0]">
    <button type="button" className="w-[29px] border-r border-[#b00000] bg-[#202020] leading-[15px]">指标</button>
    <button type="button" className="w-[31px] border-r-2 border-[#b00000] leading-[15px]">模板</button>
    <button type="button" className="w-[31px] border-r border-[#b00000] leading-[15px] text-[#00ffff]">全部</button>
    {indicators.map((name) => (
      <button
        key={name}
        type="button"
        className="border-r border-[#b00000] pl-[4px] pr-[3px] font-['Liberation_Mono',monospace] text-[10px] leading-[15px]"
      >
        {name}
      </button>
    ))}
  </div>
);

export default function App() {
  return (
    <div className="flex min-h-screen flex-col bg-black font-['Liberation_Sans','Noto_Sans_CJK_SC',sans-serif] text-[12px] leading-[16px]">
      <Header />
      <div className="flex flex-1">
        <div className="flex min-w-0 flex-1 flex-col">
          <div className="flex flex-1">
            <main className="flex min-w-0 flex-1 flex-col">
              <ChartToolbar />
              <div className="flex">
                <div className="min-w-0 flex-1 overflow-hidden">
                  <PriceChart />
                  <VolumeChart />
                  <TimeAxis />
                  <IndicatorTabs />
                </div>
                <AxisColumn />
              </div>
              <div className="flex flex-1 border-y border-[#b00000] pl-px text-[#c0c0c0]">
                <button type="button" className="w-[43px] border-r border-[#b00000]">开弹幕</button>
                <button type="button" className="w-[44px] border-r border-[#b00000]">扩展∧</button>
                <button type="button" className="w-[56px] border-r border-[#b00000]">关联报价</button>
              </div>
            </main>
            <QuotePanel />
          </div>
          <StatusBar />
        </div>
        <SideBar />
      </div>
    </div>
  );
}
